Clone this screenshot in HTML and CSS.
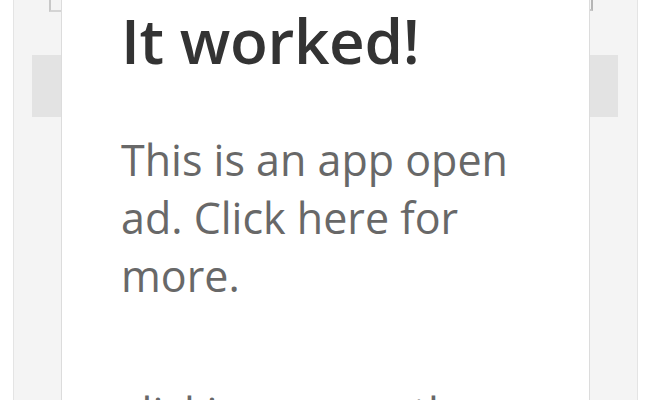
FILE: index.html
```html
<!DOCTYPE html>
<html>
<head>
<meta charset="utf-8">
<link rel="stylesheet" href="styles.css">
</head>
<body>
<div class="panel">
  <div class="top-marks">
    <span class="mark-left"></span>
    <span class="mark-right"></span>
  </div>
  <div class="bar"></div>
</div>
<div class="modal">
  <h1 class="title">It worked!</h1>
  <p class="text">This is an app open ad. Click here for more.</p>
  <p class="text">clicking opens the app</p>
</div>
</body>
</html>
```

FILE: styles.css
```css
html, body {
  margin: 0;
  padding: 0;
  background: #ffffff;
  height: 400px;
  overflow: hidden;
}
body {
  position: relative;
  font-family: "Open Sans", "Noto Sans", sans-serif;
}
.panel {
  margin-left: 13px;
  width: 625px;
  height: 400px;
  background: #f4f4f4;
  border-left: 1px solid #e4e4e4;
  border-right: 1px solid #e4e4e4;
  box-sizing: border-box;
}
.top-marks {
  height: 55px;
  position: relative;
}
.mark-left {
  position: absolute;
  left: 35px;
  top: 0;
  width: 12px;
  height: 10px;
  border-left: 2px solid #c8c8c8;
  border-bottom: 2px solid #d4d4d4;
}
.mark-right {
  position: absolute;
  left: 573px;
  top: 0;
  width: 4px;
  height: 9px;
  border-right: 2px solid #b5b5b5;
  border-bottom: 2px solid #c8c8c8;
}
.bar {
  margin-left: 18px;
  width: 586px;
  height: 62px;
  background: #e3e3e3;
}
.modal {
  position: absolute;
  left: 61px;
  top: -1px;
  width: 529px;
  height: 540px;
  box-sizing: border-box;
  background: #ffffff;
  border: 1px solid #dcdcdc;
  padding: 0 40px 0 59px;
}
.title {
  margin: 2px 0 0 0;
  font-size: 62px;
  line-height: 76px;
  font-weight: 600;
  color: #333333;
  letter-spacing: -0.3px;
}
.text {
  margin: 53px 0 0 0;
  font-size: 43px;
  line-height: 58px;
  font-weight: 400;
  color: #686868;
  width: 400px;
}
.text + .text {
  margin-top: 79px;
}
```
